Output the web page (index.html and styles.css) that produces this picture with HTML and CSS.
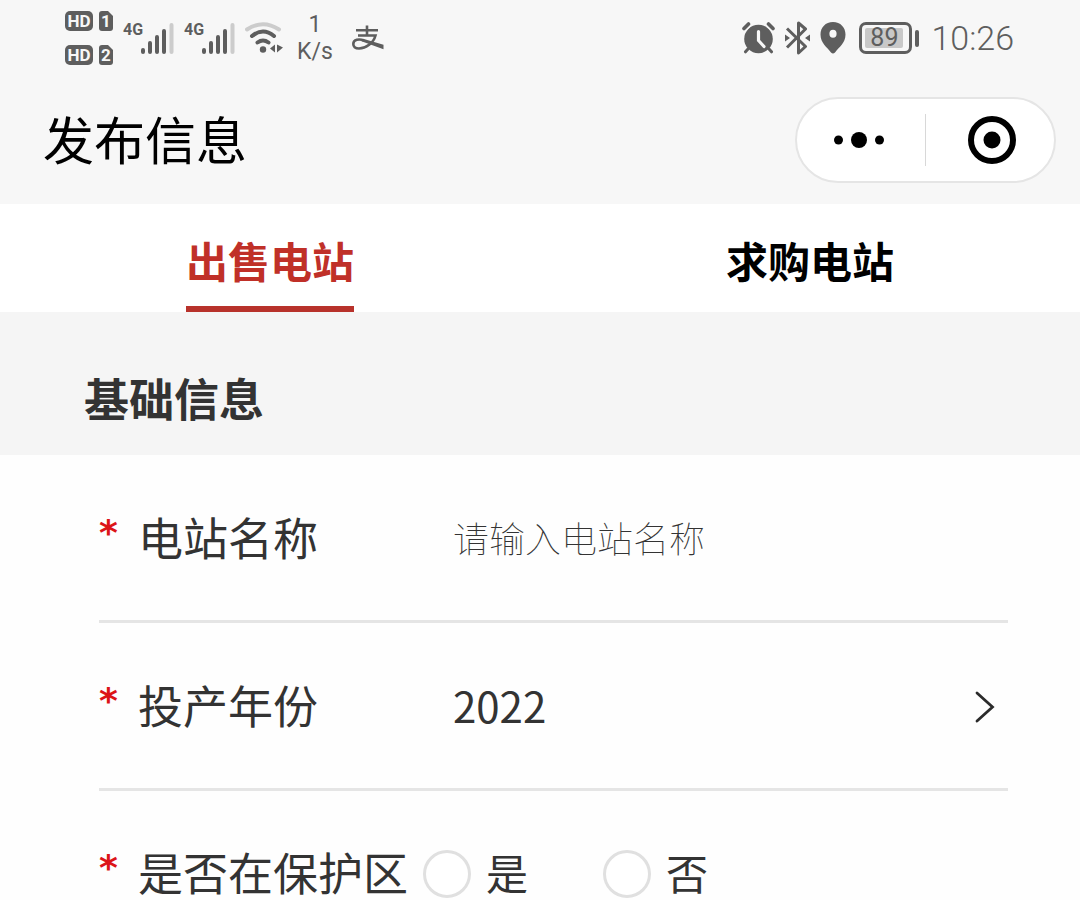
FILE: index.html
```html
<!DOCTYPE html>
<html lang="zh-CN">
<head>
<meta charset="utf-8">
<meta name="viewport" content="width=device-width, initial-scale=1">
<title>发布信息</title>
<link rel="stylesheet" href="styles.css">
</head>
<body>
<header class="top">
  <div class="status">
    <div class="status-group">
      <div class="sims">
        <span class="hd">HD</span><span class="sim">1</span>
        <span class="hd">HD</span><span class="sim">2</span>
      </div>
      <div class="cell">
        <span class="net">4G</span>
        <svg width="33" height="31" viewBox="0 0 33 31" stroke="#5e5e5e" stroke-width="4" stroke-linecap="round" aria-hidden="true"><path d="M2 27v2M9 20v9M16 14v15M23 8v21"/><path d="M30.500 2v27" stroke="#ccc"/></svg>
      </div>
      <div class="cell">
        <span class="net">4G</span>
        <svg width="33" height="31" viewBox="0 0 33 31" stroke="#5e5e5e" stroke-width="4" stroke-linecap="round" aria-hidden="true"><path d="M2 27v2M9 20v9M16 14v15M23 8v21"/><path d="M30.500 2v27" stroke="#ccc"/></svg>
      </div>
      <svg class="wifi" width="38" height="32" viewBox="0 0 38 32" fill="none" stroke-width="4" stroke-linecap="round" aria-hidden="true"><path d="M2 7.500Q18 -3 34 7.500" stroke="#ccc"/><path d="M7 14Q18 5 29 14M12.500 20.500Q18 16.500 23.500 20.500" stroke="#5e5e5e"/><circle cx="18" cy="27.500" r="3.200" fill="#5e5e5e"/><path d="M30 22.500v8l-5-4zM32 22.500v8l6-5z" fill="#5e5e5e"/></svg>
      <div class="speed"><span>1</span><span>K/s</span></div>
      <svg class="alipay" width="32" height="26" viewBox="0 0 32 26" fill="none" stroke="#5e5e5e" stroke-width="2.600" aria-hidden="true"><path d="M4 5.200H26M15 .5V10.500M6 10.500H23.500C21.500 18 14 23.500 7 23.500C3 23.500 1.300 21.500 1.300 19C1.300 14.500 7 13.500 12 15.500"/><path d="M11 13.800L31.500 19.800V24.200L9.500 16.300z" fill="#5e5e5e" stroke="none"/></svg>
    </div>
    <div class="status-group status-right">
      <svg width="33" height="32" viewBox="0 0 33 32" fill="none" stroke-linecap="round" aria-hidden="true"><circle cx="16.500" cy="17" r="14.300" fill="#5e5e5e"/><path d="M2 6.500L7 2M31 6.500L26 2" stroke="#f7f7f7" stroke-width="6"/><path d="M2 6.500L6.500 2M31 6.500L26.500 2" stroke="#5e5e5e" stroke-width="3.600"/><path d="M6 27L3.500 29.800M27 27l2.500 2.800" stroke="#5e5e5e" stroke-width="3"/><path d="M16.500 9.500V18.500L22 24.500" stroke="#f7f7f7" stroke-width="3.200"/></svg>
      <svg width="25" height="34" viewBox="0 0 25 34" fill="none" stroke="#5e5e5e" stroke-width="3" stroke-linejoin="round" aria-hidden="true"><path d="M2 7.500L20.500 25.500L13.500 32V2L20.500 8L2 26.500"/><path d="M0 13.500L5 17L0 20.500zM25 13.500L20 17L25 20.500z" fill="#5e5e5e" stroke="none"/></svg>
      <svg width="26" height="32" viewBox="0 0 26 32" aria-hidden="true"><path fill="#5e5e5e" fill-rule="evenodd" d="M13 0C5.500 0 .5 5.500 .5 12.500C.5 21 7 25 11 30.500Q13 32.500 15 30.500C19 25 25.500 21 25.500 12.500C25.500 5.500 20.500 0 13 0zM13 7.800a3.600 4 0 1 1 0 8a3.600 4 0 1 1 0-8z"/></svg>
      <div class="battery"><span class="charge">89</span></div>
      <time class="clock">10:26</time>
    </div>
  </div>
  <div class="nav">
    <h1 class="title">发布信息</h1>
    <div class="capsule">
      <button class="capsule-btn" type="button" aria-label="更多"><svg width="50" height="16" viewBox="0 0 50 16" aria-hidden="true"><circle cx="4.500" cy="8" r="4.500"/><circle cx="25" cy="8" r="8"/><circle cx="45.500" cy="8" r="4.500"/></svg></button>
      <button class="capsule-btn capsule-close" type="button" aria-label="关闭"><svg width="48" height="48" viewBox="0 0 48 48" aria-hidden="true"><circle cx="24" cy="24" r="21" fill="none" stroke="#000" stroke-width="6"/><circle cx="24" cy="24" r="8.500"/></svg></button>
    </div>
  </div>
</header>
<main>
  <div class="tabs" role="tablist">
    <button class="tab tab-active" type="button" role="tab" aria-selected="true">出售电站</button>
    <button class="tab" type="button" role="tab" aria-selected="false">求购电站</button>
  </div>
  <h2 class="section">基础信息</h2>
  <form class="form">
    <div class="row">
      <span class="star">*</span>
      <label class="label" for="name">电站名称</label>
      <input class="text" id="name" type="text" placeholder="请输入电站名称">
    </div>
    <div class="row">
      <span class="star">*</span>
      <label class="label" for="year">投产年份</label>
      <select class="year" id="year"><option>2022</option></select>
      <svg class="chevron" width="20" height="34" viewBox="0 0 20 34" fill="none" stroke="#2b2b2b" stroke-width="2.800" stroke-linecap="round" aria-hidden="true"><path d="M2 3L17.500 17L2 31"/></svg>
    </div>
    <div class="row row-last" role="radiogroup" aria-labelledby="zone">
      <span class="star">*</span>
      <span class="label label-wide" id="zone">是否在保护区</span>
      <div class="options">
        <label class="option"><input class="radio" type="radio" name="zone">是</label>
        <label class="option"><input class="radio" type="radio" name="zone">否</label>
      </div>
    </div>
  </form>
</main>
</body>
</html>
```
FILE: styles.css
```css
* { box-sizing: border-box; }
body {
  margin: 0;
  background: #fefefe;
  color: #333;
  font-family: "Noto Sans CJK SC", sans-serif;
}
button, input, select { font: inherit; color: inherit; }
svg { display: block; flex: none; }
.top { background: #f7f7f7; }

.status {
  display: flex;
  justify-content: space-between;
  align-items: center;
  height: 76px;
  padding: 0 66px 0 65px;
  color: #5e5e5e;
  font-family: Roboto, sans-serif;
}
.status-group { display: flex; align-items: center; gap: 10px; }
.sims {
  display: grid;
  grid-template-columns: 28px 14px;
  gap: 14px 6px;
}
.hd, .sim {
  height: 20px;
  border-radius: 5px;
  background: #5e5e5e;
  color: #f7f7f7;
  font-size: 17px;
  font-weight: 700;
  line-height: 20px;
  text-align: center;
}
.sim {
  border-radius: 3px;
  clip-path: polygon(0 0, 9px 0, 100% 5px, 100% 100%, 0 100%);
}
.cell { display: flex; align-items: flex-start; }
.net { width: 18px; font-size: 16px; font-weight: 700; line-height: 14px; }
.speed {
  display: grid;
  margin-left: 4px;
  font-size: 23px;
  line-height: 27px;
  text-align: center;
}
.alipay { margin-left: 9px; }
.battery {
  position: relative;
  width: 53px;
  height: 32px;
  margin-left: 3px;
  padding: 3px;
  border: 3px solid #5e5e5e;
  border-radius: 7px;
}
.battery::after {
  content: "";
  position: absolute;
  top: 5px;
  right: -10px;
  width: 4px;
  height: 17px;
  border-radius: 2px;
  background: #5e5e5e;
}
.charge {
  display: block;
  width: 38px;
  height: 20px;
  border-radius: 2px;
  background: #c8c8c8;
  font-size: 25px;
  line-height: 20px;
  text-align: center;
}
.clock { margin-left: 9px; font-size: 34px; font-weight: 300; }

.nav {
  display: flex;
  justify-content: space-between;
  align-items: center;
  padding: 21px 24px 21px 43px;
}
.title {
  margin: 0;
  padding-bottom: 4px;
  color: #000;
  font-size: 51px;
  font-weight: 400;
  line-height: 72px;
}
.capsule {
  display: flex;
  align-items: center;
  width: 261px;
  height: 86px;
  border: 2px solid #e5e5e5;
  border-radius: 43px;
  background: #fff;
}
.capsule-btn {
  display: grid;
  flex: 1;
  place-items: center;
  height: 52px;
  padding: 0;
  border: 0;
  background: none;
}
.capsule-close { border-left: 1px solid #d8d8d8; padding-left: 5px; }
.capsule-btn:first-child { padding-right: 4px; }

.tabs { display: flex; background: #fff; }
.tab {
  display: grid;
  flex: 1;
  justify-content: center;
  height: 108px;
  padding: 26px 0 0;
  border: 0;
  background: none;
  color: #000;
  font-size: 42px;
  font-weight: 700;
  line-height: 60px;
}
.tab::after { content: ""; align-self: end; height: 6px; }
.tab-active { color: #c03028; }
.tab-active::after { background: #b8322b; }

.section {
  margin: 0;
  padding: 56px 84px 27px;
  background: #f5f5f5;
  font-size: 45px;
  font-weight: 700;
  line-height: 60px;
}
.form { padding: 0 72px 0 99px; }
.row {
  display: flex;
  align-items: flex-start;
  min-height: 168px;
  padding-top: 60px;
  border-bottom: 3px solid #e5e5e5;
  font-size: 45px;
  line-height: 44px;
}
.row-last { min-height: 0; padding-top: 59px; border: 0; }
.star {
  width: 39px;
  color: #dc1418;
  font-family: "DejaVu Sans", sans-serif;
  font-size: 36px;
  font-weight: 700;
  line-height: 36px;
}
.label { width: 315px; white-space: nowrap; }
.label-wide { width: 285px; }
.text, .year {
  flex: 1;
  min-width: 0;
  height: 44px;
  margin: 0;
  padding: 0;
  border: 0;
  outline: 0;
  background: none;
}
.text { font-size: 36px; }
.text::placeholder { color: #333; font-weight: 100; opacity: 1; }
.year { appearance: none; font-size: 42px; }
.chevron { margin: 7px 13px 0 0; }
.options { display: flex; gap: 75px; font-size: 42px; }
.option { display: flex; gap: 15px; }
.radio {
  appearance: none;
  width: 48px;
  height: 48px;
  margin: 0;
  border: 3px solid #e0e0e0;
  border-radius: 50%;
  background: #fff;
}
.radio:checked { border: 14px solid #b8322b; }
```
